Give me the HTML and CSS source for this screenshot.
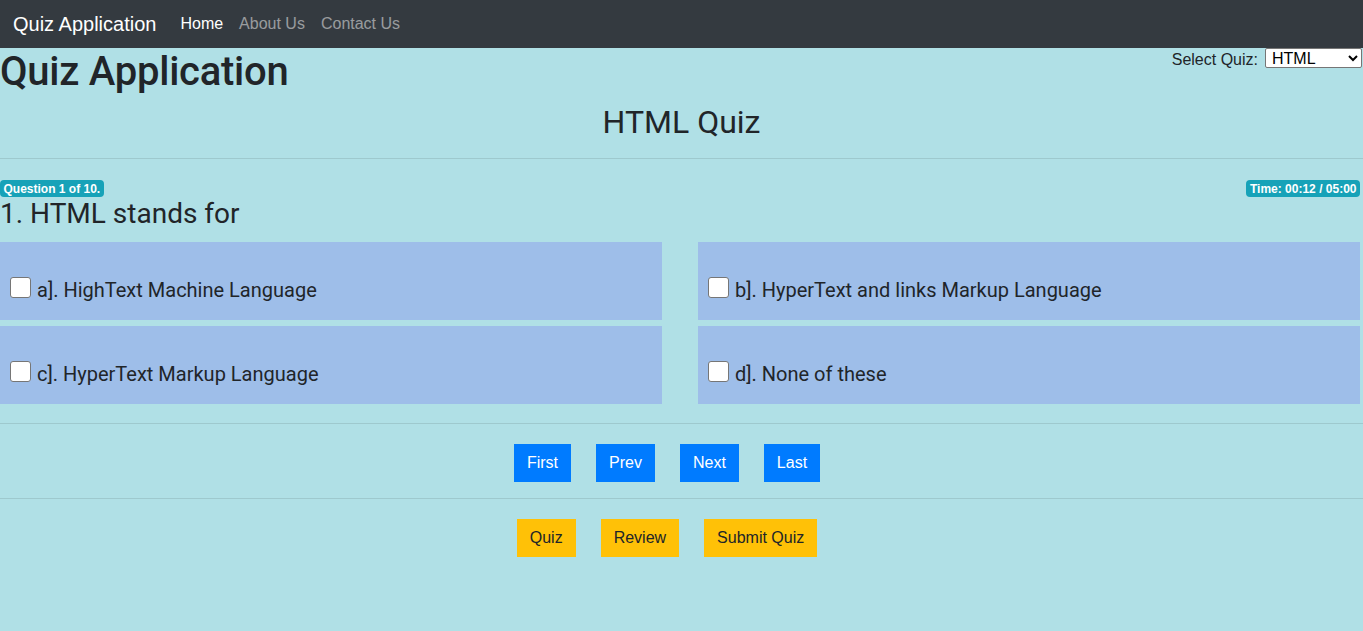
FILE: index.html
```html
<!DOCTYPE html>
<html lang="en">
<head>
<meta charset="utf-8">
<title>Quiz Application</title>
<link rel="stylesheet" href="styles.css">
</head>
<body>
<nav class="navbar">
  <a class="brand" href="#">Quiz Application</a>
  <ul class="nav-links">
    <li><a class="nav-link active" href="#">Home</a></li>
    <li><a class="nav-link" href="#">About Us</a></li>
    <li><a class="nav-link" href="#">Contact Us</a></li>
  </ul>
</nav>
<main class="page">
  <div class="top-row">
    <h1 class="app-title">Quiz Application</h1>
    <div class="picker">
      <label class="picker-label" for="quiz">Select Quiz:</label>
      <select id="quiz" class="picker-select">
        <option>HTML</option>
        <option>CSS</option>
        <option>JavaScript</option>
      </select>
    </div>
  </div>
  <h2 class="quiz-title">HTML Quiz</h2>
  <hr class="rule rule-top">
  <div class="badge-row">
    <span class="badge">Question 1 of 10.</span>
    <span class="badge">Time: 00:12 / 05:00</span>
  </div>
  <h3 class="question">1. HTML stands for</h3>
  <div class="options">
    <label class="option"><input type="checkbox" class="check">a]. HighText Machine Language</label>
    <label class="option"><input type="checkbox" class="check">b]. HyperText and links Markup Language</label>
    <label class="option"><input type="checkbox" class="check">c]. HyperText Markup Language</label>
    <label class="option"><input type="checkbox" class="check">d]. None of these</label>
  </div>
  <hr class="rule rule-mid">
  <div class="btn-row">
    <button class="btn btn-blue">First</button>
    <button class="btn btn-blue">Prev</button>
    <button class="btn btn-blue">Next</button>
    <button class="btn btn-blue">Last</button>
  </div>
  <hr class="rule rule-low">
  <div class="btn-row">
    <button class="btn btn-yellow">Quiz</button>
    <button class="btn btn-yellow">Review</button>
    <button class="btn btn-yellow">Submit Quiz</button>
  </div>
</main>
</body>
</html>
```
FILE: styles.css
```css
* { box-sizing: border-box; }
html, body {
  margin: 0;
  padding: 0;
}
body {
  background: #b0e0e6;
  color: #212529;
  font-family: "Liberation Sans", Arial, sans-serif;
  font-size: 16px;
  line-height: 24px;
  min-height: 631px;
}
.navbar {
  height: 48px;
  background: #343a40;
  display: flex;
  align-items: center;
  padding: 0 13px;
}
.brand {
  color: #fff;
  font-size: 20px;
  text-decoration: none;
  margin-right: 16px;
  line-height: 30px;
}
.nav-links {
  list-style: none;
  margin: 0;
  padding: 0;
  display: flex;
}
.nav-link {
  display: block;
  padding: 0 8px;
  color: rgba(255, 255, 255, 0.5);
  text-decoration: none;
  line-height: 24px;
}
.nav-link.active { color: #fff; }

.top-row {
  display: flex;
  justify-content: space-between;
  align-items: flex-start;
}
.app-title {
  margin: 0 0 7px;
  font-family: Roboto, sans-serif;
  font-weight: 500;
  font-size: 40px;
  line-height: 48px;
  letter-spacing: -0.25px;
}
.picker {
  display: flex;
  align-items: flex-start;
  gap: 7px;
  padding-right: 1px;
}
.picker-label { line-height: 24px; }
.picker-select {
  height: 20px;
  width: 97px;
  font-family: "Liberation Sans", Arial, sans-serif;
  font-size: 16px;
  border: 1px solid #767676;
  border-radius: 2px;
  background: #fff;
  color: #000;
  padding: 0 0 0 2px;
}
.quiz-title {
  margin: 0;
  text-align: center;
  font-family: Roboto, sans-serif;
  font-weight: 400;
  font-size: 32px;
  line-height: 38px;
}
.rule {
  border: 0;
  border-top: 1px solid rgba(0, 0, 0, 0.1);
  margin: 0;
}
.rule-top { margin: 17px 0 16px; }
.rule-mid { margin: 19px 0 20px; }
.rule-low { margin: 16px 0 20px; }

.badge-row {
  display: flex;
  justify-content: space-between;
  align-items: flex-start;
  padding-right: 3px;
  height: 24px;
}
.badge {
  display: inline-block;
  background: #17a2b8;
  color: #fff;
  font-weight: 700;
  font-size: 12px;
  line-height: 12px;
  padding: 3px 3.5px 2px;
  border-radius: 4px;
  margin-top: 5px;
}
.question {
  margin: 0 0 13px;
  font-family: Roboto, sans-serif;
  font-weight: 400;
  font-size: 28px;
  line-height: 30px;
}
.options {
  display: grid;
  grid-template-columns: 662px 662px;
  column-gap: 36px;
  row-gap: 6px;
}
.option {
  display: block;
  background: #9ebee9;
  height: 78px;
  padding: 33px 10px 15px;
  font-family: Roboto, sans-serif;
  font-size: 20px;
  line-height: 30px;
}
.check {
  appearance: none;
  -webkit-appearance: none;
  display: inline-block;
  width: 21px;
  height: 21px;
  margin: 0 6px 0 0;
  background: #fff;
  border: 1px solid #767676;
  border-radius: 3px;
  vertical-align: -1px;
}
.btn-row {
  display: flex;
  justify-content: center;
  padding-right: 4px;
}
.btn {
  height: 38px;
  padding: 0 12px;
  margin-right: 25px;
  border-width: 1px;
  border-style: solid;
  border-radius: 0;
  font-family: "Liberation Sans", Arial, sans-serif;
  font-size: 16px;
  line-height: 24px;
}
.btn-blue {
  background: #007bff;
  border-color: #007bff;
  color: #fff;
}
.btn-yellow {
  background: #ffc107;
  border-color: #ffc107;
  color: #212529;
}
```
